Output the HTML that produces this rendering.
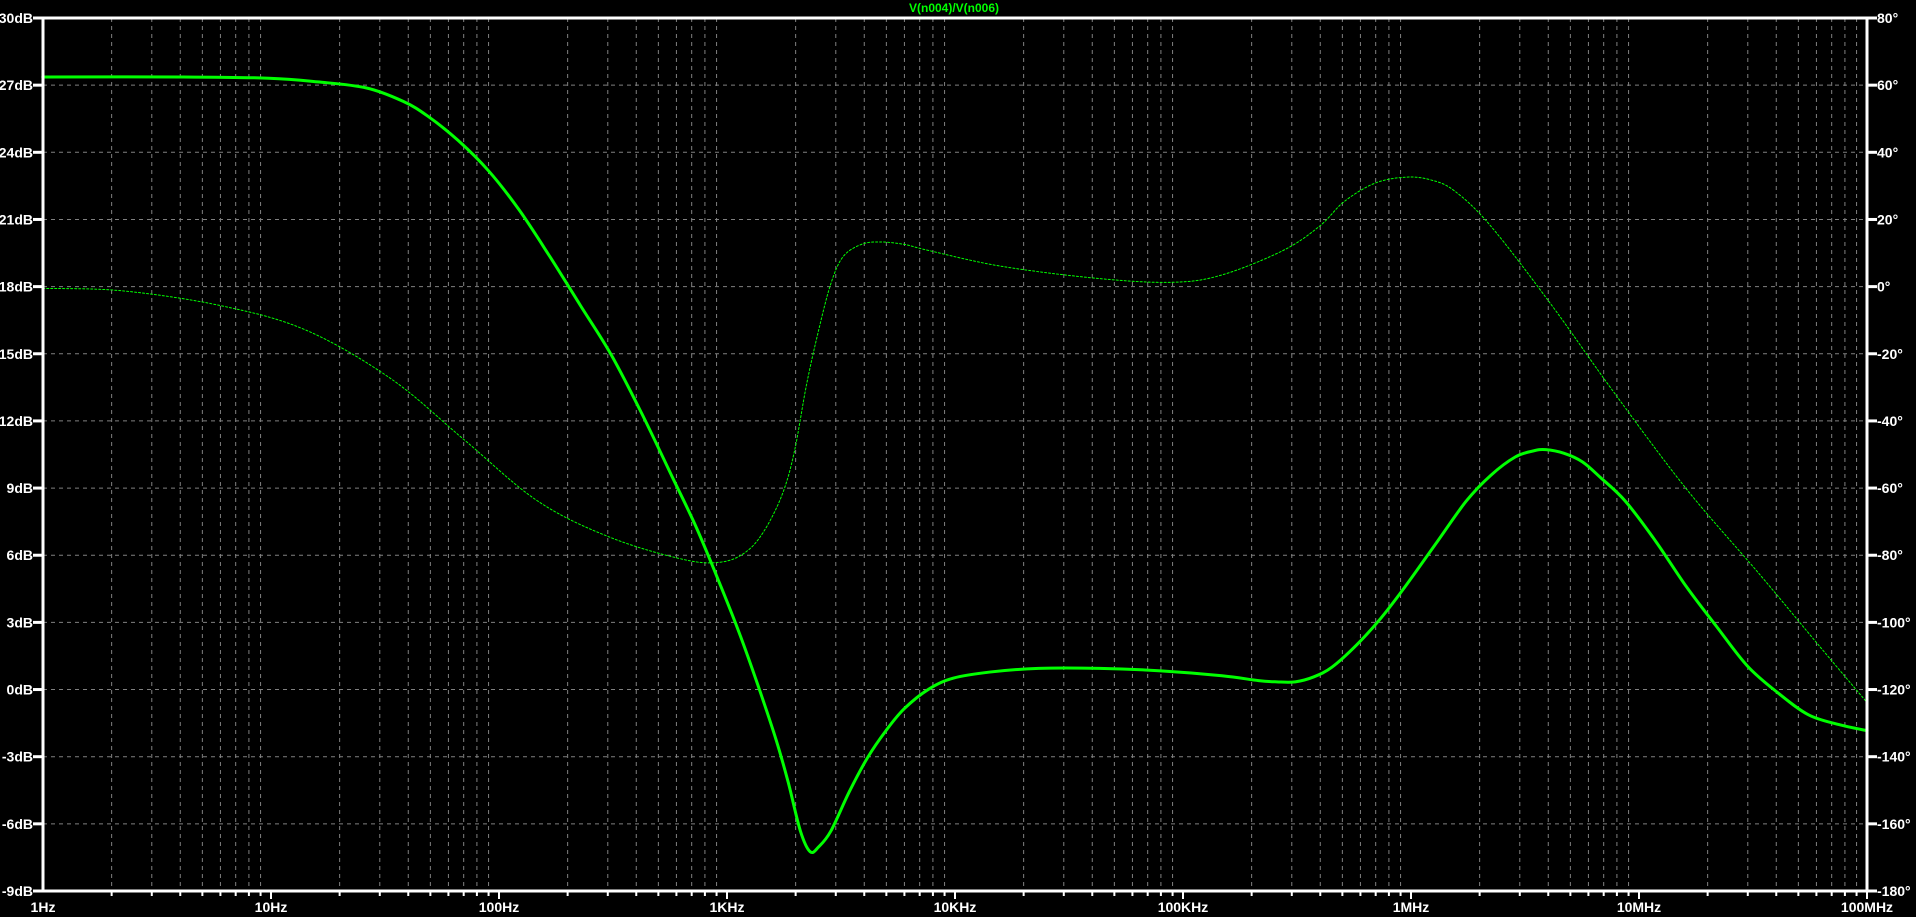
<!DOCTYPE html>
<html><head><meta charset="utf-8"><style>
html,body{margin:0;padding:0;background:#000;width:1916px;height:917px;overflow:hidden}
svg{display:block}
text{font-family:"Liberation Sans",sans-serif;font-weight:bold;font-size:14px;fill:#fff}
</style></head><body>
<svg id="s" width="1916" height="917" viewBox="0 0 1916 917" xmlns="http://www.w3.org/2000/svg">
<g id="grid" stroke="#808080" stroke-width="1" stroke-dasharray="4 4"></g>
<g id="lab"></g>
<g transform="scale(1.22194)" fill="none" stroke-linejoin="round" stroke-linecap="round">
<path id="ph" stroke="#00ff00" stroke-width="1" stroke-dasharray="2 2" vector-effect="non-scaling-stroke" data-p="35,236 100,238 180,250 250,270 320,310 380,360 440,410 500,440 560,458 590,460 610,452 625,435 640,405 650,370 660,315 670,270 680,232 690,210 705,200 720,198 740,200 760,205 820,218 900,228 960,231 1000,225 1050,205 1080,185 1100,165 1125,150 1150,145 1170,147 1190,156 1220,185 1270,250 1320,320 1380,400 1440,470 1490,530 1528,575"/>
<path id="mg" stroke="#00ff00" stroke-width="3" vector-effect="non-scaling-stroke" data-p="35,63 150,63 220,64 260,67 300,72 330,83 350,95 375,115 400,140 425,172 450,210 475,250 500,290 525,338 550,390 570,432 590,480 605,518 620,560 635,605 645,640 655,680 663,697 670,693 680,680 695,648 710,620 725,598 740,580 760,564 780,555 810,550 850,547 900,547 950,549 1000,553 1030,557 1045,558 1060,558 1075,554 1090,546 1110,528 1130,506 1150,480 1175,445 1200,410 1220,389 1240,374 1255,369 1265,368 1280,371 1295,378 1310,391 1330,410 1355,443 1380,480 1405,513 1430,545 1455,567 1480,585 1505,593 1528,598"/>
</g>
<g id="ax" stroke="#fff" stroke-width="3" fill="none"></g>
<text x="954" y="12" text-anchor="middle" style="fill:#00ff00;font-size:12px">V(n004)/V(n006)</text>
</svg>
<script>
var L=43,R=1867,T=18,B=891,D=(R-L)/8,S=(B-T)/13;
var g=document.getElementById('grid'),ax=document.getElementById('ax'),lab=document.getElementById('lab');
var ns='http://www.w3.org/2000/svg';
function el(p,t,a,txt){var e=document.createElementNS(ns,t);for(var k in a)e.setAttribute(k,a[k]);if(txt)e.textContent=txt;p.appendChild(e);return e;}
var xl=['1Hz','10Hz','100Hz','1KHz','10KHz','100KHz','1MHz','10MHz','100MHz'];
for(var d=0;d<8;d++){for(var m=2;m<=10;m++){var x=L+D*(d+Math.log10(m));if(m<10)el(g,'line',{x1:x,y1:T,x2:x,y2:B});
el(ax,'line',{x1:x,y1:B,x2:x,y2:B+(m==10?8:5),'stroke-width':2});}}
for(var i=0;i<=8;i++){el(lab,'text',{x:L+D*i,y:912,'text-anchor':'middle'},xl[i]);}
for(var j=0;j<=13;j++){var y=T+S*j;if(j>0&&j<13)el(g,'line',{x1:L,y1:y,x2:R,y2:y});
el(ax,'line',{x1:33,y1:y,x2:L,y2:y});el(ax,'line',{x1:R,y1:y,x2:R+10,y2:y});
el(lab,'text',{x:33,y:y+5,'text-anchor':'end'},(30-3*j)+'dB');
el(lab,'text',{x:R+10,y:y+5},(80-20*j)+'°');}
el(ax,'line',{x1:L,y1:T,x2:R,y2:T});el(ax,'line',{x1:L,y1:B,x2:R,y2:B});
el(ax,'line',{x1:L,y1:T,x2:L,y2:B});el(ax,'line',{x1:R,y1:T,x2:R,y2:B});
['ph','mg'].forEach(function(id){var e=document.getElementById(id);
var p=e.getAttribute('data-p').split(' ').map(function(s){return s.split(',').map(Number);});
var d='M'+p[0][0]+','+p[0][1];
for(var i=0;i<p.length-1;i++){var a=p[Math.max(0,i-1)],b=p[i],c=p[i+1],n=p[Math.min(p.length-1,i+2)];
d+=' C'+(b[0]+(c[0]-a[0])/6)+','+(b[1]+(c[1]-a[1])/6)+' '+(c[0]-(n[0]-b[0])/6)+','+(c[1]-(n[1]-b[1])/6)+' '+c[0]+','+c[1];}
e.setAttribute('d',d);e.removeAttribute('data-p');});
</script>
</body></html>
